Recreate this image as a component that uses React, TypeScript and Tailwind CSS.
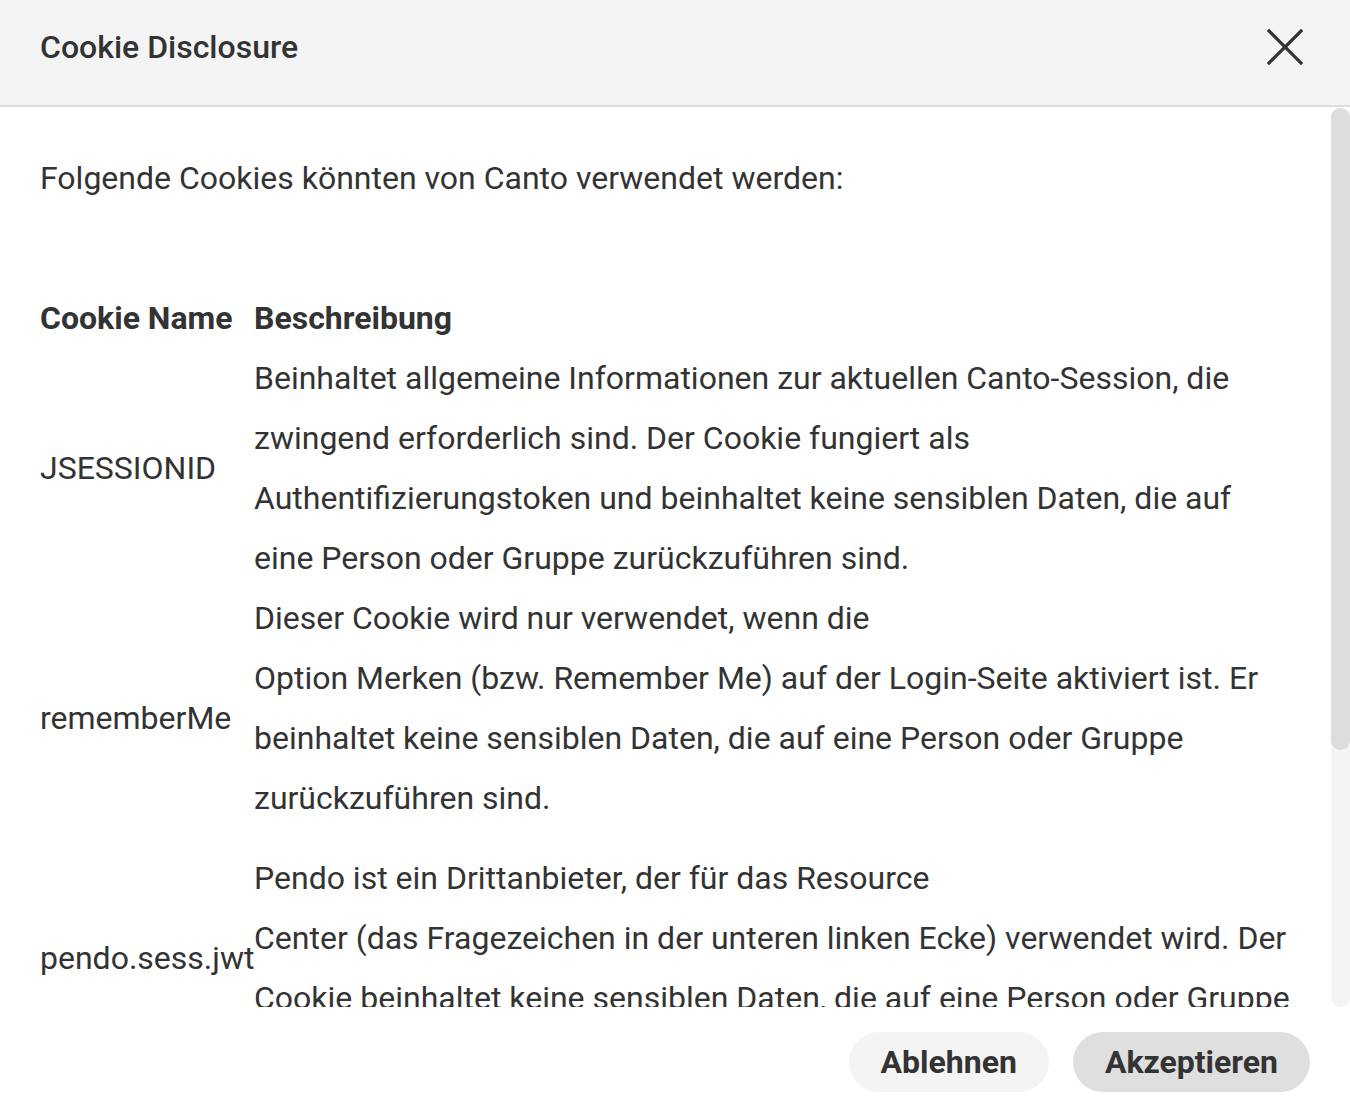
import React from 'react';

interface CookieRow {
  name: string;
  lines: string[];
  padBottom?: boolean;
}

const cookies: CookieRow[] = [
  {
    name: 'JSESSIONID',
    lines: [
      'Beinhaltet allgemeine Informationen zur aktuellen Canto-Session, die zwingend erforderlich sind. Der Cookie fungiert als Authentifizierungstoken und beinhaltet keine sensiblen Daten, die auf eine Person oder Gruppe zurückzuführen sind.',
    ],
  },
  {
    name: 'rememberMe',
    lines: [
      'Dieser Cookie wird nur verwendet, wenn die',
      'Option Merken (bzw. Remember Me) auf der Login-Seite aktiviert ist. Er beinhaltet keine sensiblen Daten, die auf eine Person oder Gruppe zurückzuführen sind.',
    ],
    padBottom: true,
  },
  {
    name: 'pendo.sess.jwt',
    lines: [
      'Pendo ist ein Drittanbieter, der für das Resource',
      'Center (das Fragezeichen in der unteren linken Ecke) verwendet wird. Der Cookie beinhaltet keine sensiblen Daten, die auf eine Person oder Gruppe zurückzuführen sind.',
    ],
  },
];

const App: React.FC = () => {
  return (
    <div className="w-[1350px] h-[1118px] flex flex-col bg-white text-[#333333] font-['Roboto','Liberation_Sans',sans-serif] overflow-hidden">
      {/* Header */}
      <div className="h-[107px] shrink-0 flex items-center justify-between bg-[#f4f4f4] border-b-2 border-[#dddddd] pl-[40px] pr-[46px] pb-[11px]">
        <h1 className="text-[32px] font-medium leading-[40px]">Cookie Disclosure</h1>
        <button aria-label="Close" className="w-[38px] h-[38px] flex items-center justify-center">
          <svg width="38" height="38" viewBox="0 0 38 38" fill="none" stroke="#333333" strokeWidth="3.2" strokeLinecap="square">
            <line x1="3" y1="3" x2="35" y2="35" />
            <line x1="35" y1="3" x2="3" y2="35" />
          </svg>
        </button>
      </div>

      {/* Body */}
      <div className="h-[900px] shrink-0 flex">
        <div className="flex-1 overflow-hidden pl-[40px] pr-[40px] pt-[41px] text-[32px] leading-[60px]">
          <p className="mb-[80px]">Folgende Cookies könnten von Canto verwendet werden:</p>
          <table className="border-collapse table-fixed w-full">
            <colgroup>
              <col className="w-[214px]" />
              <col />
            </colgroup>
            <thead>
              <tr className="h-[60px]">
                <th className="text-left font-bold whitespace-nowrap p-0 align-middle">Cookie Name</th>
                <th className="text-left font-bold p-0 align-middle">Beschreibung</th>
              </tr>
            </thead>
            <tbody>
              {cookies.map((c) => (
                <tr key={c.name}>
                  <td className={`p-0 whitespace-nowrap overflow-visible align-middle ${c.name === 'pendo.sess.jwt' ? 'pb-[20px]' : ''}`}>{c.name}</td>
                  <td className={`p-0 align-top ${c.padBottom ? 'pb-[20px]' : ''}`}>
                    {c.lines.map((l, i) => (
                      <div key={i}>{l}</div>
                    ))}
                  </td>
                </tr>
              ))}
            </tbody>
          </table>
        </div>
        {/* Scrollbar */}
        <div className="w-[19px] shrink-0 pt-[1px]">
          <div className="h-[899px] rounded-full bg-[#f4f4f4]">
            <div className="h-[642px] rounded-full bg-[#dddddd]" />
          </div>
        </div>
      </div>

      {/* Footer */}
      <div className="flex-1 flex items-center justify-end gap-[24px] pr-[40px] pb-[1px]">
        <button className="h-[60px] px-[32px] rounded-full bg-[#f4f4f4] text-[32px] font-bold text-[#333333]">
          Ablehnen
        </button>
        <button className="h-[60px] px-[32px] rounded-full bg-[#dfdfdf] text-[32px] font-bold text-[#333333]">
          Akzeptieren
        </button>
      </div>
    </div>
  );
};

export default App;
